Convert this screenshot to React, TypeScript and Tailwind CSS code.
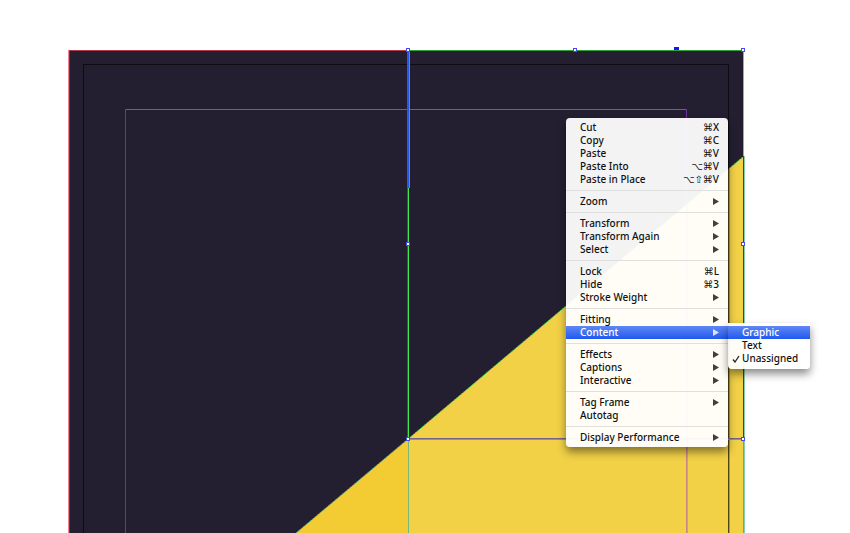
import type { ReactNode } from "react";

type MenuEntry = {
  label: string;
  keys?: string;
  items?: boolean;
};

const groups: MenuEntry[][] = [
  [
    { label: "Cut", keys: "⌘X" },
    { label: "Copy", keys: "⌘C" },
    { label: "Paste", keys: "⌘V" },
    { label: "Paste Into", keys: "⌥⌘V" },
    { label: "Paste in Place", keys: "⌥⇧⌘V" },
  ],
  [{ label: "Zoom", items: true }],
  [
    { label: "Transform", items: true },
    { label: "Transform Again", items: true },
    { label: "Select", items: true },
  ],
  [
    { label: "Lock", keys: "⌘L" },
    { label: "Hide", keys: "⌘3" },
    { label: "Stroke Weight", items: true },
  ],
  [
    { label: "Fitting", items: true },
    { label: "Content", items: true },
  ],
  [
    { label: "Effects", items: true },
    { label: "Captions", items: true },
    { label: "Interactive", items: true },
  ],
  [
    { label: "Tag Frame", items: true },
    { label: "Autotag" },
  ],
  [{ label: "Display Performance", items: true }],
];

const contentTypes = ["Graphic", "Text", "Unassigned"];

const handles = [
  [408, 50],
  [575, 50],
  [743, 50],
  [408, 244],
  [743, 244],
  [408, 439],
  [743, 439],
];

function MenuButton({ active, children }: { active?: boolean; children: ReactNode }) {
  return (
    <button
      type="button"
      role="menuitem"
      className={`flex h-[13px] w-full items-center justify-between pr-[9px] pl-[14px] text-left whitespace-nowrap ${
        active ? "bg-linear-to-b from-[#5f86f3] to-[#1f58ef] text-white" : "text-[#111111]"
      }`}
    >
      {children}
    </button>
  );
}

function Arrow() {
  return (
    <svg viewBox="0 0 6 7" className="h-[7px] w-[6px] fill-current opacity-80" aria-hidden="true">
      <path d="M0 0 6 3.5 0 7Z" />
    </svg>
  );
}

function Artwork() {
  return (
    <svg width="850" height="533" viewBox="0 0 850 533" className="block max-w-none" aria-label="Document page">
      <rect x="69" y="50" width="675" height="483" fill="#231f31" />
      <path d="M296 533 408 439V533Z" fill="#f3cb32" />
      <path d="M408 439 744 156V533H408Z" fill="#f2d147" />
      <path d="M296 533 408 439" stroke="#4aa58a" strokeDasharray="2 1" fill="none" />
      <path d="M408 439 744 156" stroke="#35d24a" strokeDasharray="2 1" fill="none" />

      <g shapeRendering="crispEdges">
        {/* page edges */}
        <rect x="68" y="50" width="1" height="483" fill="#f2838f" />
        <rect x="69" y="50" width="1" height="483" fill="#8b2638" />
        <rect x="69" y="50" width="339" height="1" fill="#b13c4c" />
        <rect x="408" y="50" width="336" height="1" fill="#2fa03a" />
        <rect x="743" y="50" width="1" height="106" fill="#56d965" />
        <rect x="743" y="156" width="1" height="283" fill="#2b3a9c" />
        <rect x="744" y="156" width="1" height="377" fill="#86cfae" />
        <rect x="743" y="439" width="1" height="94" fill="#c9863c" />

        {/* bleed box */}
        <rect x="83" y="64" width="646" height="1" fill="#0d0b14" />
        <rect x="83" y="64" width="1" height="469" fill="#0d0b14" />
        <rect x="728" y="64" width="1" height="105" fill="#0d0b14" />
        <rect x="728" y="169" width="1" height="364" fill="#4f4415" />
        <rect x="729" y="169" width="1" height="364" fill="#b29a35" />

        {/* margins */}
        <rect x="125" y="109" width="562" height="1" fill="#a83ab4" />
        <rect x="125" y="109" width="1" height="424" fill="#6d30a6" />
        <rect x="686" y="109" width="1" height="95" fill="#6d30a6" />
        <rect x="686" y="204" width="1" height="329" fill="#c98a86" />
        <rect x="687" y="204" width="1" height="329" fill="#d4a070" />

        {/* selected frame */}
        <rect x="407" y="50" width="1" height="138" fill="#4b5a86" />
        <rect x="408" y="50" width="1" height="138" fill="#2455ee" />
        <rect x="409" y="50" width="1" height="138" fill="#4b9f80" />
        <rect x="408" y="188" width="1" height="251" fill="#42e653" />
        <rect x="407" y="188" width="1" height="251" fill="#39574b" />
        <rect x="408" y="439" width="1" height="94" fill="#76b87b" />
        <rect x="408" y="438" width="336" height="1" fill="#74628e" />
        <rect x="408" y="439" width="336" height="1" fill="#a68980" />
        <rect x="674" y="47" width="5" height="3" fill="#1414ff" />

        {handles.map(([x, y]) => (
          <g key={`${x}-${y}`}>
            <rect x={x - 2} y={y - 2} width="4" height="4" fill="#4a45f5" />
            <rect x={x - 1} y={y - 1} width="2" height="2" fill="#ffffff" />
          </g>
        ))}
      </g>
    </svg>
  );
}

function ContentMenu() {
  return (
    <ul
      role="menu"
      aria-label="Content"
      className="absolute -top-[3px] left-full w-[82px] rounded-b bg-white/95 pt-[3px] pb-1 shadow-[0_5px_9px_rgba(0,0,0,0.45)]"
    >
      {contentTypes.map((type) => (
        <li key={type} role="none" className="relative">
          <MenuButton active={type === "Graphic"}>{type}</MenuButton>
          {type === "Unassigned" && (
            <svg viewBox="0 0 8 8" className="absolute top-[3px] left-1 h-2 w-2" aria-hidden="true">
              <path d="M1 4.5 3 7 7 1" fill="none" stroke="#222222" strokeWidth="1.3" />
            </svg>
          )}
        </li>
      ))}
    </ul>
  );
}

function ContextMenu() {
  return (
    <div
      role="menu"
      aria-label="Frame options"
      className="absolute top-[118px] left-[566px] w-[162px] rounded bg-white/95 py-[3px] shadow-[0_5px_9px_rgba(0,0,0,0.45)]"
    >
      {groups.map((group, index) => (
        <div key={group[0].label} role="group">
          {index > 0 && (
            <div className="flex h-[9px] items-center">
              <hr className="w-full border-[#dfdfde]" />
            </div>
          )}
          {group.map((entry) => (
            <div key={entry.label} className="relative">
              <MenuButton active={entry.label === "Content"}>
                <span>{entry.label}</span>
                {entry.keys && <kbd className="font-['Noto_Sans','DejaVu_Sans',sans-serif] text-[10px]">{entry.keys}</kbd>}
                {entry.items && <Arrow />}
              </MenuButton>
              {entry.label === "Content" && <ContentMenu />}
            </div>
          ))}
        </div>
      ))}
    </div>
  );
}

export default function App() {
  return (
    <main className="relative h-screen overflow-hidden bg-white font-['Noto_Sans','DejaVu_Sans',sans-serif] text-[10px] leading-[13px] font-medium">
      <Artwork />
      <ContextMenu />
    </main>
  );
}
